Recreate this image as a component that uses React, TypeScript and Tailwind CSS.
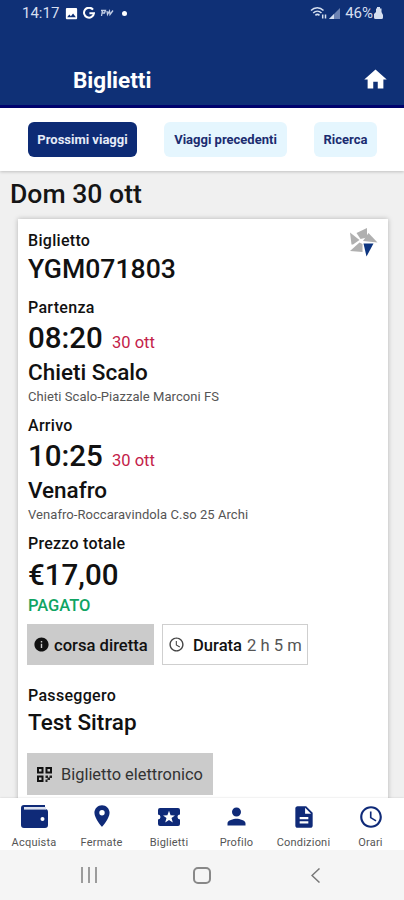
import React from "react";
import {
  MdAccessTime,
  MdDescription,
  MdHome,
  MdImage,
  MdInfo,
  MdLocationOn,
  MdPerson,
} from "react-icons/md";

interface StopProps {
  label: string;
  time: string;
  day: string;
  city: string;
  address: string;
}

interface NavItemProps {
  label: string;
  className: string;
  children: React.ReactNode;
}

function StatusBar() {
  return (
    <div className="flex h-[26px] items-center text-[#d5dff0]">
      <span className="ml-[22px] w-[42px] text-[15px] leading-[26px]">
        14:17
      </span>
      <MdImage size={15} className="text-white" />
      <svg
        viewBox="0 0 12 12"
        className="ml-[4px] h-[12px] w-[12px]"
        fill="none"
        stroke="white"
        strokeWidth="2"
      >
        <path d="M10 2.6A5 5 0 1 0 11 6.2H6.4" />
      </svg>
      <svg
        viewBox="0 0 14 10"
        className="ml-[5px] h-[10px] w-[14px]"
        fill="none"
        stroke="#c3cfe6"
        strokeWidth="1.3"
      >
        <path d="M1 2.5H5.5L4.5 5H2.5M2.5 2.5L1.5 8M7 3L7.5 6.5L9.5 3L10 6.5L13 2.5" />
      </svg>
      <span className="ml-[8px] h-[5px] w-[5px] rounded-full bg-white"></span>
      <svg
        viewBox="0 0 18 14"
        className="ml-auto h-[14px] w-[18px]"
        fill="none"
        stroke="#d5dff0"
        strokeWidth="1.5"
      >
        <path d="M1 4.5C4.5 .8 10 .8 13.5 4.5M3.2 7C5.7 4.5 9 4.5 11.5 7M5.4 9.4C6.8 8 8 8 9.5 9.4" />
        <path d="M12.7 12.5V8.5M15.5 8.5V12.5" />
      </svg>
      <svg viewBox="0 0 11 11" className="ml-[1px] h-[11px] w-[11px]">
        <path d="M0 11L11 0V11Z" fill="#6d83b3" />
        <path d="M0 11L5 6V11Z" fill="#d5dff0" />
      </svg>
      <span className="ml-[5px] text-[15px] leading-[26px]">46%</span>
      <svg
        viewBox="0 0 9 12"
        className="mr-[21px] ml-[1px] h-[12px] w-[9px]"
        fill="#d5dff0"
      >
        <path d="M3 0H6V1.5H7.5V5L9 8V10.5Q9 12 7.5 12H1.5Q0 12 0 10.5V7L2 5V1.5H3Z" />
      </svg>
    </div>
  );
}

function Header() {
  return (
    <div className="h-[108px] shrink-0 border-b-[3px] border-[#00036e] bg-[#0f3076]">
      <StatusBar />
      <div className="mt-[40px] flex h-[28px] items-center justify-between pr-[15px] pl-[73px] text-white">
        <h1 className="text-[22.5px] leading-[28px] font-bold">Biglietti</h1>
        <MdHome size={27} className="-mt-[2px]" />
      </div>
    </div>
  );
}

function Tabs() {
  return (
    <div className="relative flex h-[63px] shrink-0 items-start bg-white pt-[14px] pl-[28px] text-[13px] leading-[35px] font-bold text-[#1b2c70] shadow-[0_1px_3px_rgba(0,0,0,0.2)]">
      <button className="h-[35px] w-[109px] rounded-[6px] bg-[#0d2b75] text-[#e6ecf8]">
        Prossimi viaggi
      </button>
      <button className="ml-[27px] h-[35px] w-[123px] rounded-[6px] bg-[#e5f6fe]">
        Viaggi precedenti
      </button>
      <button className="ml-[27px] h-[35px] w-[63px] rounded-[6px] bg-[#e5f6fe]">
        Ricerca
      </button>
    </div>
  );
}

function Logo() {
  return (
    <svg viewBox="0 0 28 29" className="h-[29px] w-[28px]">
      <g fill="#b0b0b0">
        <path d="M6.5 5L17 0V9.5L10.5 11Z" />
        <path d="M0 4.5L9.5 12L3 16.5H1.5Z" />
        <path d="M0 23L9.5 14.5L12.5 16V24Z" />
        <path d="M18.5 5L27.5 14.5L13 13Z" />
      </g>
      <path d="M13.5 15.5H23.5L16.5 28.5Z" fill="#0d3580" />
    </svg>
  );
}

function QrIcon() {
  return (
    <svg viewBox="0 0 15 15" className="h-[15px] w-[15px]">
      <g fill="none" stroke="#111" strokeWidth="2">
        <path d="M1 1H5.5V5.5H1ZM9.5 1H14V5.5H9.5ZM1 9.5H5.5V14H1Z" />
      </g>
      <path
        d="M8.5 8.5H11V11H8.5ZM12.5 8.5H15V11H12.5ZM10.5 10.5H13V13H10.5ZM8.5 12.5H10.5V15H8.5Z"
        fill="#222"
      />
    </svg>
  );
}

function Stop({ label, time, day, city, address }: StopProps) {
  return (
    <div>
      <div className="h-[18px] text-[16px] leading-[18px] font-medium tracking-[0.3px]">
        {label}
      </div>
      <div className="mt-[3px] flex h-[36px] leading-[36px]">
        <span className="w-[84px] text-[29.5px] font-medium">{time}</span>
        <span className="pt-[5px] text-[16.5px] text-[#c32148]">{day}</span>
      </div>
      <div className="mt-[2px] h-[28px] text-[22.5px] leading-[28px] font-medium">
        {city}
      </div>
      <div className="mt-[3px] h-[16px] text-[13px] leading-[16px] tracking-[0.06px] text-[#555]">
        {address}
      </div>
    </div>
  );
}

function Ticket() {
  return (
    <div className="mr-[16px] ml-[18px] h-[640px] bg-white pt-[13px] pl-[10px] text-[#111] shadow-[0_0_5px_rgba(0,0,0,0.25)]">
      <div className="flex justify-between pr-[10px]">
        <div>
          <div className="h-[18px] text-[16px] leading-[18px] font-medium tracking-[0.3px]">
            Biglietto
          </div>
          <div className="mt-[3px] h-[32px] text-[26.6px] leading-[32px] font-medium">
            YGM071803
          </div>
        </div>
        <div className="-mt-[4px]">
          <Logo />
        </div>
      </div>
      <div className="mt-[14px]">
        <Stop
          label="Partenza"
          time="08:20"
          day="30 ott"
          city="Chieti Scalo"
          address="Chieti Scalo-Piazzale Marconi FS"
        />
      </div>
      <div className="mt-[12px]">
        <Stop
          label="Arrivo"
          time="10:25"
          day="30 ott"
          city="Venafro"
          address="Venafro-Roccaravindola C.so 25 Archi"
        />
      </div>
      <div className="mt-[12px] h-[18px] text-[16px] leading-[18px] font-medium tracking-[0.25px]">
        Prezzo totale
      </div>
      <div className="mt-[4px] h-[36px] text-[29.5px] leading-[36px] font-medium">
        €17,00
      </div>
      <div className="mt-[3px] h-[20px] text-[16.5px] leading-[20px] font-medium text-[#0fa463]">
        PAGATO
      </div>
      <div className="mt-[8px] -ml-[1px] flex h-[41px] text-[16.6px] leading-[41px]">
        <div className="flex w-[127px] items-center bg-[#cbcbcb] pl-[6px] font-medium">
          <MdInfo size={17} />
          <span className="ml-[4px] pt-[1px]">corsa diretta</span>
        </div>
        <div className="ml-[8px] flex w-[146px] items-center border border-[#cfcfcf] pl-[5px]">
          <MdAccessTime size={17} className="text-[#444]" />
          <span className="ml-[8px] pt-[1px] font-medium">Durata</span>
          <span className="ml-[5px] pt-[1px] text-[#555]">2 h 5 m</span>
        </div>
      </div>
      <div className="mt-[22px] h-[18px] text-[16px] leading-[18px] font-medium tracking-[0.3px]">
        Passeggero
      </div>
      <div className="mt-[3px] h-[28px] text-[22.5px] leading-[28px] font-medium">
        Test Sitrap
      </div>
      <button className="mt-[17px] -ml-[1px] flex h-[42px] w-[186px] items-center bg-[#cbcbcb] pl-[10px] text-[16.4px]">
        <QrIcon />
        <span className="ml-[9px] pt-[2px] text-[#333]">
          Biglietto elettronico
        </span>
      </button>
    </div>
  );
}

function NavItem({ label, className, children }: NavItemProps) {
  return (
    <div className={`flex flex-col items-center ${className}`}>
      <div className="flex h-[38px] items-center text-[#0f2a78]">
        {children}
      </div>
      <span className="text-[11px] leading-[15px] tracking-[0.2px] whitespace-nowrap text-[#555]">
        {label}
      </span>
    </div>
  );
}

function BottomNav() {
  return (
    <div className="relative flex h-[52px] shrink-0 justify-between bg-white shadow-[0_0_2px_rgba(0,0,0,0.15)]">
      <NavItem label="Acquista" className="w-[68px]">
        <svg viewBox="0 0 27 23" className="h-[23px] w-[27px]">
          <path
            d="M3 0H24V2H3.5V4H24Q27 4 27 7V20Q27 23 24 23H3Q0 23 0 20V3Q0 0 3 0Z"
            fill="currentColor"
          />
          <path d="M3 2H25V4.6H3Z" fill="#dbe1ef" />
          <circle cx="21.5" cy="14" r="2" fill="white" />
        </svg>
      </NavItem>
      <NavItem label="Fermate" className="w-[67px]">
        <MdLocationOn size={26} className="-mt-[1px]" />
      </NavItem>
      <NavItem label="Biglietti" className="w-[68px]">
        <svg viewBox="0 0 22 18" className="h-[18px] w-[22px]">
          <path
            d="M2 0H20Q22 0 22 2V6.5A2.5 2.5 0 0 0 22 11.5V16Q22 18 20 18H2Q0 18 0 16V11.5A2.5 2.5 0 0 0 0 6.5V2Q0 0 2 0Z"
            fill="currentColor"
          />
          <path
            d="M11 2.8L12.6 7.2L17 7.4L13.5 10.1L14.8 14.5L11 12L7.2 14.5L8.5 10.1L5 7.4L9.4 7.2Z"
            fill="white"
          />
        </svg>
      </NavItem>
      <NavItem label="Profilo" className="w-[67px]">
        <MdPerson size={27} />
      </NavItem>
      <NavItem label="Condizioni" className="w-[67px]">
        <MdDescription size={26} />
      </NavItem>
      <NavItem label="Orari" className="w-[67px]">
        <MdAccessTime size={26} />
      </NavItem>
    </div>
  );
}

function SystemBar() {
  return (
    <div className="relative flex h-[50px] shrink-0 items-center bg-[#f5f5f5] text-[#777]">
      <svg
        viewBox="0 0 16 16"
        className="ml-[81px] h-[16px] w-[16px]"
        stroke="currentColor"
        strokeWidth="1.4"
      >
        <path d="M1 0V16M8 0V16M15 0V16" />
      </svg>
      <div className="ml-[96px] h-[17px] w-[18px] rounded-[5px] border-2 border-[#888]"></div>
      <svg
        viewBox="0 0 9 15"
        className="ml-[100px] h-[15px] w-[9px]"
        fill="none"
        stroke="currentColor"
        strokeWidth="1.5"
      >
        <path d="M8.5 .5L1 7.5L8.5 14.5" />
      </svg>
    </div>
  );
}

export default function App() {
  return (
    <div className="flex h-[900px] w-[404px] flex-col overflow-hidden bg-[#f0f0f0] font-['Roboto','Liberation_Sans',sans-serif]">
      <Header />
      <Tabs />
      <div className="min-h-0 flex-1 overflow-hidden">
        <h2 className="mt-[7px] mb-[9px] ml-[10px] h-[32px] text-[26.6px] leading-[32px] font-medium text-[#151515]">
          Dom 30 ott
        </h2>
        <Ticket />
      </div>
      <BottomNav />
      <SystemBar />
    </div>
  );
}
